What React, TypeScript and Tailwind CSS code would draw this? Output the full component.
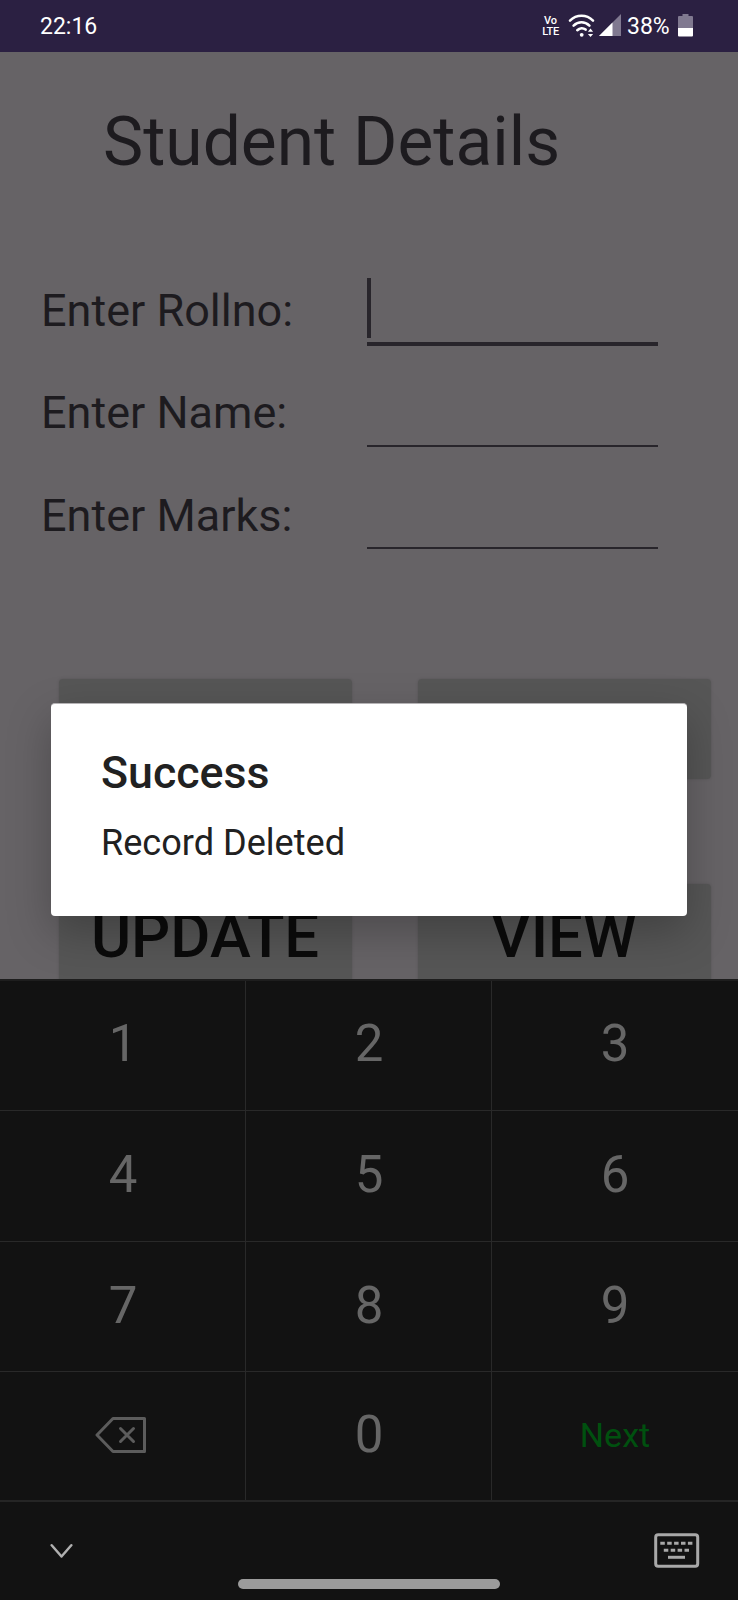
import React from "react";

const FIELDS = [
  { label: "Enter Rollno:", focused: true },
  { label: "Enter Name:", focused: false },
  { label: "Enter Marks:", focused: false },
];

const DIGITS = ["1", "2", "3", "4", "5", "6", "7", "8", "9"];

function WifiIcon() {
  return (
    <svg width="28" height="24" viewBox="0 0 28 24" fill="none" stroke="#fff" strokeLinecap="round">
      <path d="M2 6.600C8.500 .2 18.500 .2 25 6.600" strokeWidth="2.600" />
      <path d="M5.600 11.600C10.200 7.100 16.800 7.100 21.400 11.600" strokeWidth="2.600" />
      <path d="M9.300 16.200C11.800 13.800 15.200 13.700 17.600 15.600" strokeWidth="2.600" />
      <circle cx="13.700" cy="20.800" r="1.900" fill="#fff" stroke="none" />
      <path d="M19.900 17.700 22.500 14.600l2.600 3.100zM19.900 20h5.200L22.500 23.100z" fill="#fff" stroke="none" />
    </svg>
  );
}

function SignalIcon() {
  return (
    <svg width="22" height="22" viewBox="0 0 22 22">
      <path d="M22 0v22H0z" fill="#807990" />
      <path d="M13.500 8.500V22H0z" fill="#fff" />
    </svg>
  );
}

function BatteryIcon() {
  return (
    <svg width="15" height="23" viewBox="0 0 15 23">
      <path d="M4.500 0h6v2H14q1 0 1 1V14H0V3q0-1 1-1h3.500z" fill="#807990" />
      <path d="M0 14h15v7.500q0 1-1 1H1q-1 0-1-1z" fill="#fff" />
    </svg>
  );
}

function StatusBar() {
  return (
    <header className="flex h-[52px] items-center bg-[#2b2042] pr-[45px] pl-[40px] text-white">
      <span className="pt-px text-[23px] leading-[52px]">22:16</span>
      <div className="ml-auto flex h-full items-center">
        <div className="mr-[9px] flex w-[17px] flex-col items-center text-[11px] leading-none font-medium">
          <span>Vo</span>
          <span className="tracking-[-0.3px]">LTE</span>
        </div>
        <div className="mr-[3px] -mt-px"><WifiIcon /></div>
        <div className="-mt-[2px]"><SignalIcon /></div>
        <span className="ml-[6px] w-[43px] pt-px text-[23px] leading-[52px] whitespace-nowrap">38%</span>
        <div className="-mt-px ml-[8px]"><BatteryIcon /></div>
      </div>
    </header>
  );
}

function Field({ label, focused }: { label: string; focused: boolean }) {
  return (
    <div className="flex h-[102.500px] items-start pl-[41px]">
      <label className="w-[326px] pt-[1.500px] text-[45px] leading-[52px] whitespace-nowrap">{label}</label>
      {focused ? (
        <div className="-mt-[6px] flex h-[69px] w-[291px] flex-col border-b-4 border-[#28252b] pt-px">
          <div className="h-[60px] w-[4px] bg-[#28252b]" />
        </div>
      ) : (
        <div className="h-[61px] w-[291px] border-b-2 border-[#28252b]" />
      )}
    </div>
  );
}

function ActionButton({ children }: { children?: React.ReactNode }) {
  return (
    <button className="h-[100px] w-[293px] rounded-[4px] bg-[#565656] text-center text-[61.500px] leading-[105px] font-medium text-[#0b0b0b] shadow-[0_0_3px_rgba(0,0,0,0.15)]">
      {children}
    </button>
  );
}

function BackspaceIcon() {
  return (
    <svg width="52" height="38" viewBox="0 0 52 38" fill="none" stroke="#5c5c5c" strokeWidth="3" strokeLinejoin="round" strokeLinecap="round">
      <path d="M18 2.500H49.500V35.500H18L2 19z" />
      <path d="M25.500 12.500l13 13M38.500 12.500l-13 13" />
    </svg>
  );
}

function KeyboardIcon() {
  return (
    <svg width="46" height="36" viewBox="0 0 46 36" fill="none" stroke="#a8a8a8">
      <rect x="1.700" y="1.700" width="42" height="31.500" rx="2.500" strokeWidth="3" />
      <path d="M6.300 10.300H39" strokeWidth="3" strokeDasharray="4.500 2.400" />
      <path d="M9.800 17.300H36" strokeWidth="3" strokeDasharray="4.500 2.400" />
      <path d="M14 24.300H31" strokeWidth="3" />
    </svg>
  );
}

function Key({ children }: { children: React.ReactNode }) {
  return (
    <div className="flex items-center justify-center border-[#292929] pb-[4px] pl-px text-[51px] leading-none text-[#666] not-nth-[3n]:border-r nth-[3n]:pl-0 nth-[n+4]:border-t nth-[n+4]:pb-[3px] nth-[n+10]:pb-px">
      {children}
    </div>
  );
}

export default function App() {
  return (
    <div className="relative flex h-[1600px] w-[738px] flex-col overflow-hidden bg-[#666366] font-['Roboto',sans-serif] text-[#1d1b1f]">
      <StatusBar />
      <main className="h-[927px] overflow-hidden">
        <h1 className="pt-[50px] pl-[103px] text-[67.700px] leading-[80px] whitespace-nowrap">Student Details</h1>
        <form className="pt-[101px]">
          {FIELDS.map((f) => (
            <Field key={f.label} label={f.label} focused={f.focused} />
          ))}
        </form>
        <div className="mt-[88px] grid grid-cols-[293px_293px] gap-x-[66px] gap-y-[105px] pl-[58.500px]">
          <ActionButton />
          <ActionButton />
          <ActionButton>UPDATE</ActionButton>
          <ActionButton>VIEW</ActionButton>
        </div>
      </main>

      <section className="relative z-20 flex h-[621px] flex-col bg-[#121212]">
        <div className="grid h-[523px] grid-cols-[246px_246px_246px] grid-rows-[129px_131px_130px_129px] border-y-2 border-t-[#1e1e1e] border-b-[#252525]">
          {DIGITS.map((d) => (
            <Key key={d}>{d}</Key>
          ))}
          <Key><span className="mr-[5px]"><BackspaceIcon /></span></Key>
          <Key>0</Key>
          <Key><span className="text-[34px] text-[#00500f]">Next</span></Key>
        </div>
        <div className="grid flex-1 grid-cols-[238px_262px_1fr] items-start pr-[38px]">
          <svg className="mt-[41px] ml-[50px]" width="23" height="16" viewBox="0 0 23 16" fill="none" stroke="#b0b0b0" strokeWidth="2.500" strokeLinecap="round" strokeLinejoin="round">
            <path d="M1.700 2.300 11.500 13.500 21.300 2.300" />
          </svg>
          <div className="mt-[77px] h-[10px] rounded-full bg-[#9b9b9b]" />
          <div className="mt-[31px] justify-self-end"><KeyboardIcon /></div>
        </div>
      </section>

      <div role="dialog" className="absolute top-[703px] left-[51px] z-10 h-[213px] w-[636px] rounded-[4px] border-t border-[#b5b3b5] bg-white pt-[39px] pl-[50px] text-[#212121] shadow-[0_16px_44px_rgba(0,0,0,0.25)]">
        <h2 className="text-[44.700px] leading-[60px] font-medium">Success</h2>
        <p className="mt-[14px] text-[36.100px] leading-[52px]">Record Deleted</p>
      </div>
    </div>
  );
}
